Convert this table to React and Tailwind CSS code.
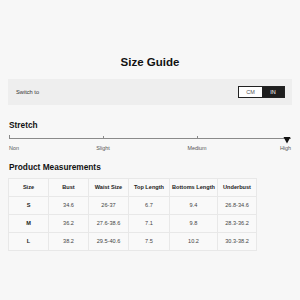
import React from 'react';

const columns = [
  { label: 'Size', w: 'w-[40px]' },
  { label: 'Bust', w: 'w-[40px]' },
  { label: 'Waist Size', w: 'w-[40px]' },
  { label: 'Top Length', w: 'w-[41px]' },
  { label: 'Bottoms Length', w: 'w-[48px]' },
  { label: 'Underbust', w: 'w-[39px]' },
];

const rows = [
  ['S', '34.6', '26-37', '6.7', '9.4', '26.8-34.6'],
  ['M', '36.2', '27.6-38.6', '7.1', '9.8', '28.3-36.2'],
  ['L', '38.2', '29.5-40.6', '7.5', '10.2', '30.3-38.2'],
];

const StretchScale = () => (
  <svg width="282" height="10" viewBox="0 0 282 10" className="block">
    <line x1="0" y1="4.5" x2="282" y2="4.5" stroke="#8a8a8a" strokeWidth="1" />
    <line x1="0.5" y1="1" x2="0.5" y2="4.5" stroke="#8a8a8a" strokeWidth="1" />
    <line x1="94.5" y1="2" x2="94.5" y2="4.5" stroke="#8a8a8a" strokeWidth="1" />
    <line x1="188.5" y1="2" x2="188.5" y2="4.5" stroke="#8a8a8a" strokeWidth="1" />
    <polygon points="274.5,3 281.5,3 278,9.5" fill="#111" />
  </svg>
);

export default function App() {
  return (
    <div className="h-[300px] w-[300px] overflow-hidden bg-[#f7f7f7] px-[8px] pt-[55px] font-['Liberation_Sans',Arial,sans-serif]">
      {/* Title */}
      <h1 className="text-center text-[11.5px] leading-[14px] font-bold text-[#111]">Size Guide</h1>

      {/* Unit switch */}
      <div className="mt-[10px] flex h-[26px] items-center justify-between bg-[#eeeeee] pl-[8px] pr-[7px]">
        <span className="text-[5.7px] text-[#333]">Switch to</span>
        <div className="flex h-[12px] border border-[#222] text-[5.5px]">
          <span className="flex w-[23px] items-center justify-center bg-white text-[#555]">CM</span>
          <span className="flex w-[22px] items-center justify-center bg-[#1e1e1e] text-white">IN</span>
        </div>
      </div>

      {/* Stretch */}
      <h2 className="mt-[15px] pl-[1px] text-[8.3px] leading-[10px] font-bold text-[#111]">Stretch</h2>
      <div className="mt-[4px] pl-[1px]">
        <StretchScale />
        <div className="mt-[1px] grid w-[282px] grid-cols-6 text-[5.4px] leading-[7px] text-[#555]">
          <span className="text-left">Non</span>
          <span className="col-span-2 text-center">Slight</span>
          <span className="col-span-2 text-center">Medium</span>
          <span className="text-right">High</span>
        </div>
      </div>

      {/* Product measurements */}
      <h2 className="mt-[10px] pl-[1px] text-[8.3px] leading-[10px] font-bold text-[#111]">Product Measurements</h2>
      <table className="mt-[6px] border-collapse bg-[#f9f9f9] text-[5.6px] text-[#444]">
        <thead>
          <tr className="h-[18px]">
            {columns.map((c) => (
              <th key={c.label} className={`${c.w} border border-[#e8e8e8] p-0 text-center font-bold text-[#222]`}>
                {c.label}
              </th>
            ))}
          </tr>
        </thead>
        <tbody>
          {rows.map((r) => (
            <tr key={r[0]} className="h-[18px]">
              {r.map((v, i) => (
                <td
                  key={i}
                  className={`border border-[#e8e8e8] p-0 text-center ${i === 0 ? 'font-bold text-[#222]' : ''}`}
                >
                  {v}
                </td>
              ))}
            </tr>
          ))}
        </tbody>
      </table>
    </div>
  );
}
